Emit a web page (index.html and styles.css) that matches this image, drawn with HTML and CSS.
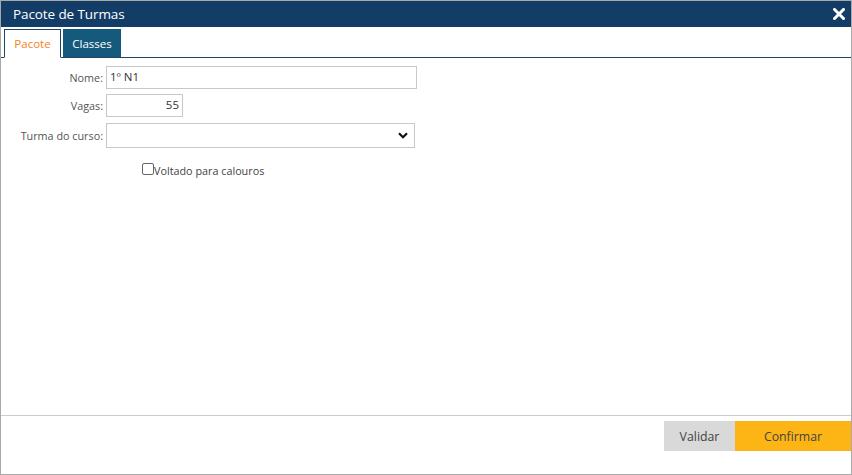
FILE: index.html
```html
<!DOCTYPE html>
<html lang="pt">
<head>
<meta charset="utf-8">
<title>Pacote de Turmas</title>
<link rel="stylesheet" href="styles.css">
</head>
<body>
<div class="dialog">
  <div class="titlebar">
    <span class="title">Pacote de Turmas</span>
    <svg class="close" width="12" height="12" viewBox="0 0 12 12"><path d="M1.5 1.5 L10.5 10.5 M10.5 1.5 L1.5 10.5" stroke="#fff" stroke-width="3" stroke-linecap="square"/></svg>
  </div>
  <div class="tabs">
    <div class="tab active">Pacote</div>
    <div class="tab">Classes</div>
  </div>
  <div class="content">
    <div class="form">
      <label class="lbl">Nome:</label>
      <div class="field"><input class="inp wide" type="text" value="1º N1"></div>
      <label class="lbl">Vagas:</label>
      <div class="field"><input class="inp short" type="text" value="55"></div>
      <label class="lbl">Turma do curso:</label>
      <div class="field">
        <div class="select">
          <svg width="10" height="7" viewBox="0 0 10 7"><path d="M1 1.2 L5 5.2 L9 1.2" fill="none" stroke="#111" stroke-width="2.2"/></svg>
        </div>
      </div>
    </div>
    <div class="check">
      <span class="box"></span><span class="ctext">Voltado para calouros</span>
    </div>
  </div>
  <div class="footer">
    <button class="btn validar">Validar</button>
    <button class="btn confirmar">Confirmar</button>
  </div>
</div>
</body>
</html>
```
FILE: styles.css
```css
html, body {
  margin: 0;
  padding: 0;
  background: #fff;
}
body {
  font-family: "Open Sans", "Noto Sans", sans-serif;
  font-size: 10.8px;
  color: #444;
}
.dialog {
  box-sizing: border-box;
  width: 852px;
  height: 475px;
  border: 1px solid #a9a9a9;
  display: flex;
  flex-direction: column;
}
.titlebar {
  height: 26px;
  background: #133d66;
  display: flex;
  align-items: center;
  justify-content: space-between;
  padding: 0 6px 0 12px;
  flex: none;
}
.title {
  color: #fff;
  font-size: 13.5px;
  letter-spacing: -0.1px;
  margin-top: -1px;
}
.close {
  display: block;
}
.tabs {
  display: flex;
  gap: 2px;
  padding: 2px 0 0 3px;
  border-bottom: 1px solid #1b4668;
  flex: none;
}
.tab {
  height: 28px;
  box-sizing: border-box;
  display: flex;
  align-items: center;
  justify-content: center;
  font-size: 11.5px;
  background: #155a7c;
  color: #fff;
  width: 58px;
  margin-bottom: -1px;
}
.tab.active {
  width: 57px;
  background: #fff;
  color: #f7821e;
  border: 1px solid #1b4668;
  border-bottom: 1px solid #fff;
  height: 29px;
}
.content {
  flex: 1;
  padding-top: 8px;
}
.form {
  display: grid;
  grid-template-columns: 102px auto;
  column-gap: 3px;
  row-gap: 5px;
  align-items: center;
}
.lbl {
  text-align: right;
  color: #555;
}
.field {
  display: flex;
}
.inp {
  box-sizing: border-box;
  height: 23px;
  border: 1px solid #c8c8c8;
  font-family: inherit;
  font-size: 11.5px;
  color: #333;
  padding: 0 3px 2px;
  margin: 0;
  outline: none;
}
.inp.wide {
  width: 311px;
}
.inp.short {
  width: 77px;
  text-align: right;
}
.select {
  box-sizing: border-box;
  width: 309px;
  height: 25px;
  border: 1px solid #c8c8c8;
  display: flex;
  align-items: center;
  justify-content: flex-end;
  padding-right: 6px;
  margin-top: 1px;
}
.check {
  display: flex;
  align-items: center;
  padding-left: 141px;
  margin-top: 15px;
  color: #444;
}
.box {
  width: 10px;
  height: 10px;
  border: 1px solid #666;
  border-radius: 2px;
  margin-top: -4px;
}
.ctext {
  margin-left: 0;
}
.footer {
  flex: none;
  height: 59px;
  border-top: 1px solid #cccccc;
  display: flex;
  justify-content: flex-end;
  align-items: flex-start;
  padding-top: 5px;
  box-sizing: border-box;
}
.btn {
  height: 30px;
  border: none;
  margin: 0;
  font-family: inherit;
  font-size: 12.3px;
  color: #444;
  padding: 0;
}
.validar {
  width: 71px;
  background: #d9d9d9;
}
.confirmar {
  width: 116px;
  background: #fdb415;
}
```
